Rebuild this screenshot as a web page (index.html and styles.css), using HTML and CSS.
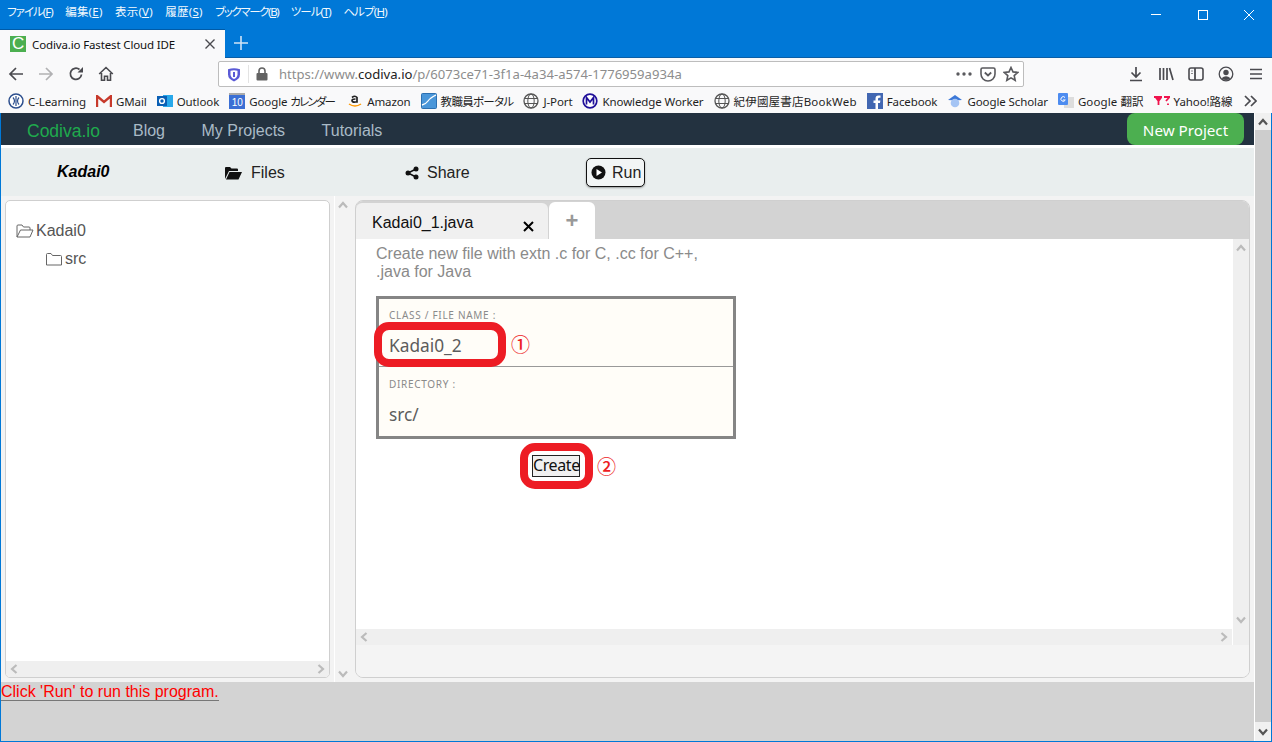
FILE: index.html
```html
<!DOCTYPE html>
<html lang="ja">
<head>
<meta charset="utf-8">
<title>Codiva.io Fastest Cloud IDE</title>
<link rel="stylesheet" href="styles.css">
</head>
<body>
<div class="window">
  <div class="titlebar">
    <div class="menus">
      <span class="k">ファイル(<u>F</u>)</span><span>編集(<u>E</u>)</span><span>表示(<u>V</u>)</span><span>履歴(<u>S</u>)</span><span class="k-l">ブックマーク(<u>B</u>)</span><span class="k">ツール(<u>T</u>)</span><span class="k-s">ヘルプ(<u>H</u>)</span>
    </div>
    <div class="winctl">
      <svg width="12" height="12" viewBox="0 0 12 12"><path d="M0 5.500h10" stroke="#fff" fill="none"/></svg>
      <svg width="12" height="12" viewBox="0 0 12 12"><rect x="1.500" y="1.500" width="9" height="9" stroke="#fff" fill="none"/></svg>
      <svg width="12" height="12" viewBox="0 0 12 12"><path d="M1 1l10 10M11 1L1 11" stroke="#fff" fill="none"/></svg>
    </div>
  </div>
  <div class="tabstrip">
    <div class="btab">
      <span class="favicon">C</span>
      <span class="btab-title">Codiva.io Fastest Cloud IDE</span>
      <svg class="btab-x" width="10" height="10" viewBox="0 0 10 10"><path d="M0.500 0.500l9 9M9.500 0.500l-9 9" stroke="#4a4a4f" stroke-width="1.400" fill="none"/></svg>
    </div>
    <svg class="newtab" width="14" height="14" viewBox="0 0 14 14"><path d="M7 0v14M0 7h14" stroke="#cfe3f6" stroke-width="1.600" fill="none"/></svg>
  </div>
  <div class="navbar">
    <div class="navbtns">
      <svg width="16" height="16" viewBox="0 0 16 16"><path d="M15 8H2M8 2L2 8l6 6" stroke="#4a4a4f" stroke-width="1.700" fill="none"/></svg>
      <svg width="16" height="16" viewBox="0 0 16 16"><path d="M1 8h13M8 2l6 6-6 6" stroke="#b1b1b3" stroke-width="1.700" fill="none"/></svg>
      <svg width="16" height="16" viewBox="0 0 16 16"><path d="M13.500 8.500A5.600 5.600 0 1 1 11.500 3.500" stroke="#4a4a4f" stroke-width="1.800" fill="none"/><path d="M15 1v5.500H9.500z" fill="#4a4a4f"/></svg>
      <svg width="16" height="16" viewBox="0 0 16 16"><path d="M1.200 8L8 1.500 14.800 8M3.500 7v7.200h3v-4h3v4h3V7" stroke="#4a4a4f" stroke-width="1.600" fill="none"/></svg>
    </div>
    <div class="urlbar">
      <svg class="shield" width="14" height="15" viewBox="0 0 14 15"><path d="M1 2.200Q7 .2 13 2.200v5Q13 12 7 14.400 1 12 1 7.200z" fill="#5b5bd6"/><path d="M3.500 3.800Q7 2.800 10.500 3.800v3.400Q10.500 10.400 7 12 3.500 10.400 3.500 7.200z" fill="#fff"/><path d="M6 5h2v5H6z" fill="#5b5bd6"/></svg>
      <span class="urlsep"></span>
      <svg class="lock" width="12" height="14" viewBox="0 0 12 14"><path d="M3 6V4a3 3 0 0 1 6 0v2" stroke="#636363" stroke-width="1.600" fill="none"/><rect x="0.500" y="6" width="11" height="7.500" rx="1" fill="#636363"/></svg>
      <span class="url">https://www.<b>codiva.io</b>/p/6073ce71-3f1a-4a34-a574-1776959a934a</span>
      <svg class="dots" width="16" height="4" viewBox="0 0 16 4"><circle cx="2" cy="2" r="1.700" fill="#5a5a5e"/><circle cx="8" cy="2" r="1.700" fill="#5a5a5e"/><circle cx="14" cy="2" r="1.700" fill="#5a5a5e"/></svg>
      <svg width="16" height="15" viewBox="0 0 16 15"><path d="M1 2.500Q1 1 2.500 1h11Q15 1 15 2.500V7A7 7 0 0 1 1 7z" stroke="#5a5a5e" stroke-width="1.600" fill="none"/><path d="M4.800 5.500L8 8.500l3.200-3" stroke="#5a5a5e" stroke-width="1.800" fill="none"/></svg>
      <svg width="16" height="16" viewBox="0 0 16 16"><path d="M8 1.500l2 4.400 4.800.5-3.600 3.200 1 4.700L8 11.900l-4.200 2.400 1-4.700L1.200 6.400 6 5.900z" stroke="#5a5a5e" stroke-width="1.600" fill="none"/></svg>
    </div>
    <div class="tools">
      <svg width="16" height="16" viewBox="0 0 16 16"><path d="M8 1v10M3.500 6.500L8 11l4.500-4.500M2 14.500h12" stroke="#4a4a4f" stroke-width="1.700" fill="none"/></svg>
      <svg width="16" height="16" viewBox="0 0 16 16"><path d="M2 2v12M5.500 2v12M9 2v12M11.500 2l3.500 12" stroke="#4a4a4f" stroke-width="1.700" fill="none"/></svg>
      <svg width="16" height="16" viewBox="0 0 16 16"><rect x="1" y="2" width="14" height="12" rx="2" stroke="#4a4a4f" stroke-width="1.600" fill="none"/><path d="M7 2v12" stroke="#4a4a4f" stroke-width="1.800" fill="none"/><path d="M3 5h2M3 7.500h2" stroke="#8a8a8e" fill="none"/></svg>
      <svg width="16" height="16" viewBox="0 0 16 16"><circle cx="8" cy="8" r="6.800" stroke="#4a4a4f" stroke-width="1.300" fill="none"/><circle cx="8" cy="6.500" r="2.700" fill="#4a4a4f"/><path d="M3.500 12.200Q8 8.500 12.500 12.200 8 16 3.500 12.200z" fill="#4a4a4f"/></svg>
      <svg width="16" height="14" viewBox="0 0 16 14"><path d="M2 2.500h12M2 7h12M2 11.500h12" stroke="#4a4a4f" stroke-width="1.700" fill="none"/></svg>
    </div>
  </div>
  <div class="bookmarks">
    <span class="bm"><svg width="16" height="16" viewBox="0 0 16 16"><circle cx="8" cy="8" r="7" fill="#fff" stroke="#2d4f8e" stroke-width="1.500"/><path d="M5 4.500Q8 8 5 11.500M11 4.500Q8 8 11 11.500M8 3v10" stroke="#2d4f8e" stroke-width="1.200" fill="none"/></svg><span>C-Learning</span></span>
    <span class="bm"><svg width="16" height="13" viewBox="0 0 16 13"><path d="M1 12V1l7 6 7-6v11" stroke="#c7392b" stroke-width="2.400" fill="none"/></svg><span>GMail</span></span>
    <span class="bm"><svg width="16" height="16" viewBox="0 0 16 16"><rect x="6" y="2" width="10" height="12" fill="#28a8ea"/><rect x="0" y="3" width="10" height="10" fill="#0a5fb4"/><circle cx="5" cy="8" r="2.400" fill="none" stroke="#fff" stroke-width="1.400"/></svg><span>Outlook</span></span>
    <span class="bm"><span class="cal">10</span><span>Google <span class="kana-tight">カレンダー</span></span></span>
    <span class="bm"><svg width="16" height="16" viewBox="0 0 16 16"><path d="M5 4.500Q8 2 10 4.500V9H8.500Q5 9.500 5 7.500 5 6 8.500 6" stroke="#222" stroke-width="1.700" fill="none"/><path d="M2 11q6 4 12 0" stroke="#f90" stroke-width="1.500" fill="none"/></svg><span>Amazon</span></span>
    <span class="bm"><svg width="16" height="16" viewBox="0 0 16 16"><rect x="0.500" y="0.500" width="15" height="15" rx="1" fill="#4a96d9" stroke="#2c6fb0"/><path d="M1 12q4-1 6-4t8-6" stroke="#fff" stroke-width="1.300" fill="none"/></svg><span class="kana-soft">教職員ポータル</span></span>
    <span class="bm"><svg width="16" height="16" viewBox="0 0 16 16"><circle cx="8" cy="8" r="7" fill="none" stroke="#555" stroke-width="1.300"/><ellipse cx="8" cy="8" rx="3.200" ry="7" fill="none" stroke="#555"/><path d="M1.500 5.500h13M1.500 10.500h13" stroke="#555" fill="none"/></svg><span>J-Port</span></span>
    <span class="bm"><svg width="16" height="16" viewBox="0 0 16 16"><circle cx="8" cy="8" r="6.800" fill="#fff" stroke="#20109a" stroke-width="1.700"/><path d="M4.500 11.500V4.500L8 9l3.500-4.500v7" stroke="#20109a" stroke-width="1.700" fill="none"/></svg><span>Knowledge Worker</span></span>
    <span class="bm"><svg width="16" height="16" viewBox="0 0 16 16"><circle cx="8" cy="8" r="7" fill="none" stroke="#555" stroke-width="1.300"/><ellipse cx="8" cy="8" rx="3.200" ry="7" fill="none" stroke="#555"/><path d="M1.500 5.500h13M1.500 10.500h13" stroke="#555" fill="none"/></svg><span class="wide">紀伊國屋書店BookWeb</span></span>
    <span class="bm"><svg width="16" height="16" viewBox="0 0 16 16"><rect width="16" height="16" fill="#4267b2"/><path d="M11 16V10h2l.4-2.500H11V6q0-1.200 1.300-1.200h1.200V2.500h-2Q8.500 2.500 8.500 5.700v1.800H6.500V10h2v6z" fill="#fff"/></svg><span>Facebook</span></span>
    <span class="bm"><svg width="16" height="16" viewBox="0 0 16 16"><path d="M8 2l7 5-7 .5L1 7z" fill="#3c78d8"/><circle cx="8" cy="10" r="4.300" fill="#a4c4f4"/></svg><span>Google Scholar</span></span>
    <span class="bm"><svg width="16" height="16" viewBox="0 0 16 16"><rect x="6" y="4" width="10" height="11" fill="#ddd"/><rect x="0" y="0" width="10" height="12" rx="1" fill="#4d8cf0"/><path d="M7 4.500A2.300 2.300 0 1 0 7.300 7H5" stroke="#fff" fill="none"/></svg><span class="wide-s">Google 翻訳</span></span>
    <span class="bm"><svg width="16" height="10" viewBox="0 0 16 10"><path d="M0 1h5M8 1H4.500v8M1.500 1L4.500 5l3-4M10 1h5.500L12 5M14 7.500v1.500" stroke="#f0134d" stroke-width="1.800" fill="none"/></svg><span>Yahoo!路線</span></span>
    <svg class="more" width="13" height="12" viewBox="0 0 13 12"><path d="M1 1l5 5-5 5M7 1l5 5-5 5" stroke="#4a4a4f" stroke-width="1.700" fill="none"/></svg>
  </div>
  <div class="viewport">
    <div class="page">
      <nav class="sitenav">
        <a class="brand">Codiva.io</a><a>Blog</a><a>My Projects</a><a>Tutorials</a>
        <span class="newproj">New Project</span>
      </nav>
      <div class="actions">
        <b class="pname">Kadai0</b>
        <span class="act act-files"><svg width="17" height="14" viewBox="0 0 17 14"><path d="M0 13V2q0-1 1-1h4l1.500 1.500H12q1 0 1 1V5H4L0 13zM4.500 6H17l-3.500 7.500H1z" fill="#111"/></svg>Files</span>
        <span class="act act-share"><svg width="14" height="14" viewBox="0 0 14 14"><circle cx="11" cy="3" r="2.500" fill="#111"/><circle cx="11" cy="11" r="2.500" fill="#111"/><circle cx="3" cy="7" r="2.500" fill="#111"/><path d="M11 3L3 7l8 4" stroke="#111" stroke-width="1.500" fill="none"/></svg>Share</span>
        <span class="run"><svg width="15" height="15" viewBox="0 0 15 15"><circle cx="7.500" cy="7.500" r="7" fill="#111"/><path d="M5.500 4l5.500 3.500L5.500 11z" fill="#fff"/></svg>Run</span>
      </div>
      <div class="workspace">
        <aside class="tree">
          <div class="tree-body">
            <div class="node"><svg width="18" height="14" viewBox="0 0 18 14"><path d="M1 13V2q0-1 1-1h4l1.500 2H13q1 0 1 1v2M1 13l3.500-7H17l-3 7z" stroke="#666" fill="none"/></svg>Kadai0</div>
            <div class="node node-sub"><svg width="16" height="13" viewBox="0 0 16 13"><path d="M.5 12V1.500q0-1 1-1h3.500l1.500 2h8q1 0 1 1V12z" stroke="#666" fill="none"/></svg>src</div>
          </div>
          <div class="hscroll">
            <svg width="8" height="10" viewBox="0 0 8 10"><path d="M6.500 1L2 5l4.500 4" stroke="#bbb" stroke-width="2.200" fill="none"/></svg>
            <svg width="8" height="10" viewBox="0 0 8 10"><path d="M1.500 1L6 5 1.500 9" stroke="#bbb" stroke-width="2.200" fill="none"/></svg>
          </div>
        </aside>
        <div class="vscroll">
          <svg width="10" height="8" viewBox="0 0 10 8"><path d="M1 6.500L5 2l4 4.500" stroke="#bbb" stroke-width="2.200" fill="none"/></svg>
          <svg width="10" height="8" viewBox="0 0 10 8"><path d="M1 1.500L5 6l4-4.500" stroke="#bbb" stroke-width="2.200" fill="none"/></svg>
        </div>
        <section class="editor">
          <div class="tabs">
            <div class="ftab">Kadai0_1.java<svg width="11" height="11" viewBox="0 0 11 11"><path d="M1 1l9 9M10 1l-9 9" stroke="#000" stroke-width="2" fill="none"/></svg></div>
            <div class="plustab">+</div>
          </div>
          <div class="pane">
            <div class="pane-left">
              <div class="pane-content">
                <p class="hint">Create new file with extn .c for C, .cc for C++,<br>.java for Java</p>
                <div class="form">
                  <div class="field field-first">
                    <label>CLASS / FILE NAME :</label>
                    <div class="val">Kadai0_2</div>
                  </div>
                  <div class="field field-last">
                    <label>DIRECTORY :</label>
                    <div class="val">src/</div>
                  </div>
                  <span class="mark mark-1"></span>
                  <span class="num num-1">①</span>
                </div>
                <div class="create-row">
                  <span class="create">Create</span>
                  <span class="mark mark-2"></span>
                  <span class="num num-2">②</span>
                </div>
              </div>
              <div class="pane-h">
                <svg width="8" height="10" viewBox="0 0 8 10"><path d="M6.500 1L2 5l4.500 4" stroke="#bbb" stroke-width="2.200" fill="none"/></svg>
                <svg width="8" height="10" viewBox="0 0 8 10"><path d="M1.500 1L6 5 1.500 9" stroke="#bbb" stroke-width="2.200" fill="none"/></svg>
              </div>
            </div>
            <div class="pane-v">
              <svg width="10" height="8" viewBox="0 0 10 8"><path d="M1 6.500L5 2l4 4.500" stroke="#bbb" stroke-width="2.200" fill="none"/></svg>
              <svg width="10" height="8" viewBox="0 0 10 8"><path d="M1 1.500L5 6l4-4.500" stroke="#bbb" stroke-width="2.200" fill="none"/></svg>
            </div>
          </div>
          <div class="pane-foot"></div>
        </section>
      </div>
      <div class="console"><span>Click 'Run' to run this program.</span></div>
    </div>
    <div class="pagescroll">
      <span class="pbtn"><svg width="10" height="8" viewBox="0 0 10 8"><path d="M1 6.500L5 2l4 4.500" stroke="#555" stroke-width="2.200" fill="none"/></svg></span>
      <span class="pthumb"></span>
      <span class="pbtn pbtn-d"><svg width="10" height="8" viewBox="0 0 10 8"><path d="M1 1.500L5 6l4-4.500" stroke="#555" stroke-width="2.200" fill="none"/></svg></span>
    </div>
  </div>
</div>
</body>
</html>
```
FILE: styles.css
```css
* { box-sizing: border-box; }
html, body { margin: 0; padding: 0; height: 100%; overflow: hidden; }
body { font-family: "Liberation Sans", Arial, sans-serif; }
.window { width: 1272px; height: 742px; background: #0078d7; display: flex; flex-direction: column; padding: 0 1px 1px 1px; }
.window svg { flex: none; display: block; }

.titlebar { height: 29px; display: flex; justify-content: space-between; color: #fff; font: 11.5px "Noto Sans", "Noto Sans CJK JP", sans-serif; font-feature-settings: "palt"; }
.menus { display: flex; gap: 12.5px; padding: 3px 0 0 6px; height: 22px; line-height: 18px; color: #f2f8fd; letter-spacing: .2px; }
.k { letter-spacing: -1px; }
.k-l { letter-spacing: -1.4px; }
.k-s { letter-spacing: -.8px; }
.winctl { display: flex; gap: 34px; padding: 9px 16px 0 0; }

.tabstrip { height: 29px; display: flex; align-items: flex-start; margin: 0 -1px; border-bottom: 1px solid #0a5ea6; }
.btab { width: 225px; height: 29px; background: #f9f9fa; border-top: 1px solid #005ba8; display: flex; align-items: center; padding: 0 10px; font: 11.5px "Noto Sans", sans-serif; letter-spacing: -.14px; color: #111; position: relative; }
.favicon { width: 16px; height: 16px; background: #4caf50; color: #fff; font: 17px/16px "Liberation Sans", sans-serif; text-align: center; margin-right: 6px; flex: none; }
.btab-title { flex: 1; white-space: nowrap; }
.newtab { margin: 7px 0 0 9px; }

.navbar { height: 32px; background: #f9f9fa; display: flex; align-items: center; padding: 0 7px 0 8px; margin: 0 -1px; }
.navbtns { display: flex; gap: 14px; width: 210px; align-items: center; }
.urlbar { width: 806px; height: 26px; background: #fff; border: 1px solid #bdbdbd; border-radius: 2px; display: flex; align-items: center; padding: 0 4px 0 8px; gap: 7px; font: 13.1px "Noto Sans", sans-serif; color: #8d8d8d; }
.urlsep { width: 1px; height: 18px; background: #e3e3e3; }
.url { flex: 1; white-space: nowrap; margin-left: 4px; }
.url b { font-weight: 400; color: #222; }
.dots { margin-right: 1px; }
.tools { display: flex; flex: 1; justify-content: flex-end; gap: 14px; align-items: center; padding-right: 1px; }

.bookmarks { height: 23px; background: #f9f9fa; display: flex; align-items: center; padding: 0 0 1px 8px; margin: 0 -1px; gap: 10px; font: 11.5px "Noto Sans", "Noto Sans CJK JP", sans-serif; font-feature-settings: "palt"; letter-spacing: -.1px; color: #1f1f1f; white-space: nowrap; }
.bm { display: flex; align-items: center; gap: 4px; }
.kana-tight { letter-spacing: -1.8px; margin-right: 3px; }
.kana-soft { letter-spacing: -.7px; }
.wide { letter-spacing: .2px; }
.wide-s { letter-spacing: .1px; }
.cal { width: 16px; height: 16px; background: #3b6fd4; color: #fff; font: 10px/15px "Liberation Sans", sans-serif; text-align: center; border-top: 2px solid #aaa; }
.more { margin-left: 2px; }

.viewport { flex: 1; display: flex; min-height: 0; background: #fff; }
.page { flex: 1; display: flex; flex-direction: column; background: #f3f3f3; min-width: 0; }
.pagescroll { width: 16px; margin-left: 1px; background: #f0f0f0; display: flex; flex-direction: column; }
.pthumb { flex: 1; background: #cdcdcd; }
.pbtn { height: 17px; display: flex; justify-content: center; align-items: center; }
.pbtn-d { height: 19px; }

.sitenav { height: 35px; background: #233240; border-bottom: 3px solid #fff; display: flex; align-items: flex-start; padding-left: 26px; font-size: 16px; color: #a9bac6; gap: 36.5px; flex: none; }
.sitenav a { line-height: 18px; padding-top: 9px; }
.sitenav .brand { color: #1faa4d; font-size: 17.5px; margin-right: -3.5px; }
.newproj { margin-left: auto; margin-right: 10px; background: #4caf50; color: #fff; width: 117px; height: 32px; border-radius: 8px; text-align: center; font: 15.2px/35px "Noto Sans", sans-serif; }

.actions { height: 48px; background: #e9eeee; display: flex; align-items: center; font-size: 16px; color: #222; flex: none; }
.pname { font-style: italic; font-size: 16px; margin-left: 56px; color: #000; width: 168px; }
.act { display: flex; align-items: center; padding-top: 2px; }
.act svg { margin-top: -1px; }
.act-files { width: 180px; gap: 9px; }
.act-share { width: 181px; gap: 8px; }
.run { display: flex; align-items: center; gap: 6px; width: 59px; height: 29px; border: 1px solid #111; border-radius: 5px; padding-left: 4px; margin-top: 1px; box-shadow: 0 1px 2px rgba(0,0,0,.35); background: #f2f5f5; }

.workspace { flex: 1; display: flex; min-height: 0; padding: 4px; }
.tree { width: 325px; background: #fff; border: 1px solid #cfcfcf; border-radius: 5px; display: flex; flex-direction: column; overflow: hidden; flex: none; }
.tree-body { flex: 1; padding-top: 20px; color: #555; font-size: 16px; }
.node { display: flex; align-items: center; height: 20px; padding-left: 10px; gap: 2px; }
.node-sub { margin-top: 8px; padding-left: 40px; gap: 3px; }
.hscroll { height: 16px; background: #efefef; display: flex; justify-content: space-between; align-items: center; padding: 0 4px; flex: none; }
.vscroll { width: 17px; margin: -4px 4px -4px 4px; border-left: 1px solid #fff; display: flex; flex-direction: column; align-items: center; justify-content: space-between; padding: 5px 0 4px; flex: none; }

.editor { flex: 1; min-width: 0; background: #f4f4f4; border: 1px solid #cfcfcf; border-radius: 8px; display: flex; flex-direction: column; overflow: hidden; }
.tabs { height: 38px; background: #d3d3d3; display: flex; align-items: flex-end; flex: none; }
.ftab { width: 192px; height: 36px; background: #f0f0f0; border-radius: 6px 6px 0 0; font-size: 16px; color: #111; display: flex; align-items: center; padding: 4px 0 0 16px; position: relative; }
.ftab svg { position: absolute; right: 14px; top: 18px; }
.plustab { width: 46px; height: 37px; margin-left: 1px; background: #fff; border-radius: 6px 6px 0 0; color: #999; font: bold 22px/38px "Liberation Sans", sans-serif; text-align: center; }
.pane { flex: 1; display: flex; min-height: 0; background: #fff; }
.pane-left { flex: 1; display: flex; flex-direction: column; min-width: 0; }
.pane-content { flex: 1; padding: 6px 0 0 20px; }
.pane-v { width: 16px; margin-left: 1px; background: #efefef; display: flex; flex-direction: column; align-items: center; justify-content: space-between; padding: 5px 0 21px; flex: none; }
.pane-h { height: 16px; background: #efefef; display: flex; justify-content: space-between; align-items: center; padding: 0 4px; flex: none; }
.pane-foot { height: 32px; background: #f4f4f4; flex: none; }
.hint { margin: 0; font-size: 16px; line-height: 18px; color: #8a8a8a; }
.form { position: relative; width: 360px; margin-top: 15px; border: 3px solid #858585; background: #fffdf8; }
.field { height: 68px; padding: 10px 0 0 10px; border-bottom: 1px solid #999; }
.field-first { padding-top: 9px; }
.field-last { height: 69px; border-bottom: 0; }
.field label { display: block; font: 10px/14px "Noto Sans", sans-serif; color: #8a8a8a; letter-spacing: .7px; }
.val { font: 17.3px/24px "Noto Sans", sans-serif; color: #5c5c5c; margin-top: 12px; }
.mark { position: absolute; border: 8px solid #ed1c24; pointer-events: none; }
.mark-1 { left: -5px; top: 23px; width: 132px; height: 45px; border-radius: 15px; }
.num { position: absolute; color: #ed1c24; font: 500 19px/20px "Noto Sans CJK JP", sans-serif; }
.num-1 { left: 132px; top: 35px; }
.create-row { position: relative; width: 360px; height: 48px; display: flex; justify-content: center; align-items: flex-start; }
.create { display: block; border: 1px solid #222; background: #f0f0f0; font: 16px/19px "Noto Sans", sans-serif; color: #111; width: 48px; height: 22px; text-align: center; letter-spacing: -.4px; margin-top: 16px; }
.mark-2 { left: 144px; top: 4px; width: 73px; height: 46px; border-radius: 15px; }
.num-2 { left: 221px; top: 17px; }

.console { height: 59px; background: #d3d3d3; color: #f00; font-size: 16px; line-height: 20px; flex: none; }
.console span { display: inline-block; border-bottom: 1px solid #777; height: 19px; }
```
